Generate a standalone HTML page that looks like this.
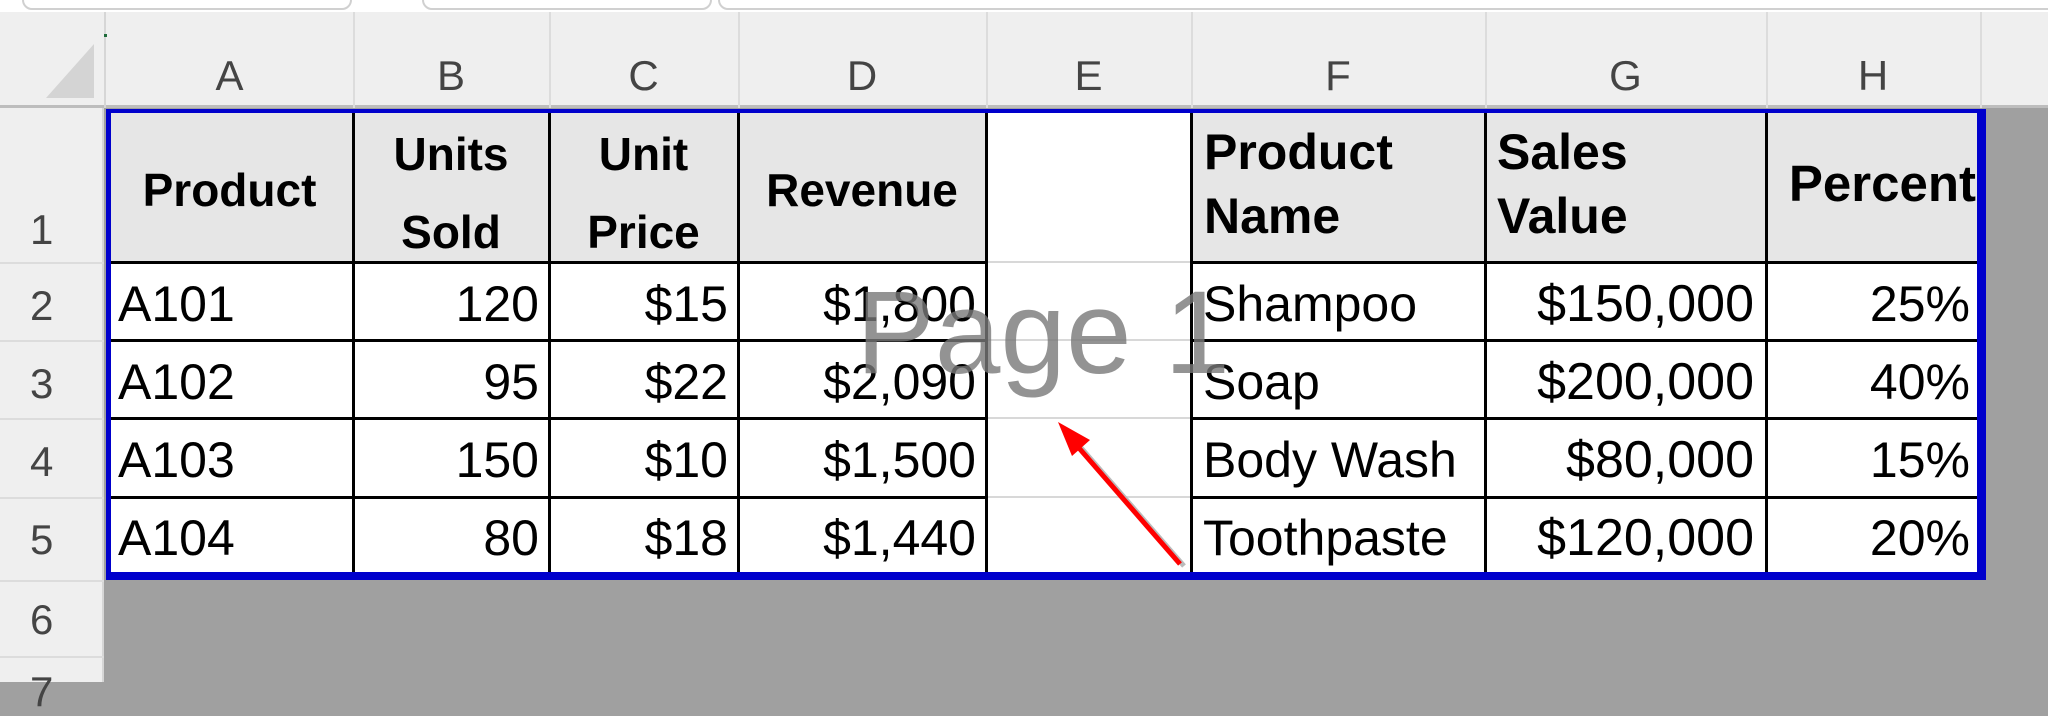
<!DOCTYPE html>
<html><head><meta charset="utf-8"><style>
body{margin:0;width:2048px;height:682px;overflow:hidden;background:#a0a0a0;position:relative;font-family:"Liberation Sans",sans-serif;}
div{position:absolute;box-sizing:border-box;}
.t{white-space:nowrap;color:#000;}
.cl{font-size:42px;color:#444;top:52px;text-align:center;}
.rl{font-size:42px;color:#444;left:30px;}
.hd{font-weight:bold;background:#e6e6e6;}
.d{font-size:50px;line-height:50px;}
</style></head><body>
<div style="left:0;top:0;width:2048px;height:12px;background:#fff;"></div>
<div style="left:22px;top:-20px;width:330px;height:30px;border:2px solid #d0d0d0;border-radius:10px;background:#fff;"></div>
<div style="left:422px;top:-20px;width:290px;height:30px;border:2px solid #d0d0d0;border-radius:10px;background:#fff;"></div>
<div style="left:718px;top:-20px;width:1400px;height:30px;border:2px solid #d0d0d0;border-radius:10px;background:#fff;"></div>
<div style="left:0;top:12px;width:2048px;height:96px;background:#efefef;border-bottom:3px solid #bdbdbd;"></div>
<div style="left:0;top:108px;width:104px;height:574px;background:#efefef;border-right:2px solid #d6d6d6;"></div>
<div style="left:104px;top:12px;width:2px;height:96px;background:#d6d6d6;"></div>
<svg style="position:absolute;left:0;top:0" width="110" height="110"><polygon points="94,44 94,98 46,98" fill="#d4d4d4"/><rect x="104" y="34" width="3" height="3" fill="#1e6b3a"/></svg>
<div class="cl" style="left:106px;width:247px;">A</div>
<div class="cl" style="left:353px;width:196px;">B</div>
<div class="cl" style="left:549px;width:189px;">C</div>
<div class="cl" style="left:738px;width:248px;">D</div>
<div class="cl" style="left:986px;width:205px;">E</div>
<div class="cl" style="left:1191px;width:294px;">F</div>
<div class="cl" style="left:1485px;width:281px;">G</div>
<div class="cl" style="left:1766px;width:214px;">H</div>
<div style="left:353px;top:12px;width:2px;height:96px;background:#dcdcdc"></div>
<div style="left:549px;top:12px;width:2px;height:96px;background:#dcdcdc"></div>
<div style="left:738px;top:12px;width:2px;height:96px;background:#dcdcdc"></div>
<div style="left:986px;top:12px;width:2px;height:96px;background:#dcdcdc"></div>
<div style="left:1191px;top:12px;width:2px;height:96px;background:#dcdcdc"></div>
<div style="left:1485px;top:12px;width:2px;height:96px;background:#dcdcdc"></div>
<div style="left:1766px;top:12px;width:2px;height:96px;background:#dcdcdc"></div>
<div style="left:1980px;top:12px;width:2px;height:96px;background:#dcdcdc"></div>
<div class="rl" style="top:206px;">1</div>
<div class="rl" style="top:282px;">2</div>
<div class="rl" style="top:360px;">3</div>
<div class="rl" style="top:438px;">4</div>
<div class="rl" style="top:516px;">5</div>
<div class="rl" style="top:596px;">6</div>
<div class="rl" style="top:668px;">7</div>
<div style="left:0;top:262px;width:104px;height:2px;background:#dcdcdc"></div>
<div style="left:0;top:340px;width:104px;height:2px;background:#dcdcdc"></div>
<div style="left:0;top:418px;width:104px;height:2px;background:#dcdcdc"></div>
<div style="left:0;top:497px;width:104px;height:2px;background:#dcdcdc"></div>
<div style="left:0;top:580px;width:104px;height:2px;background:#dcdcdc"></div>
<div style="left:0;top:656px;width:104px;height:2px;background:#dcdcdc"></div>
<div style="left:106px;top:110px;width:1876px;height:470px;background:#fff;"></div>
<div class="hd" style="left:106px;top:112px;width:247px;height:150px;"></div>
<div class="hd" style="left:353px;top:112px;width:196px;height:150px;"></div>
<div class="hd" style="left:549px;top:112px;width:189px;height:150px;"></div>
<div class="hd" style="left:738px;top:112px;width:248px;height:150px;"></div>
<div class="hd" style="left:1191px;top:112px;width:294px;height:150px;"></div>
<div class="hd" style="left:1485px;top:112px;width:281px;height:150px;"></div>
<div class="hd" style="left:1766px;top:112px;width:214px;height:150px;"></div>
<div style="left:986px;top:261px;width:205px;height:2px;background:#d8d8d8"></div>
<div style="left:986px;top:339px;width:205px;height:2px;background:#d8d8d8"></div>
<div style="left:986px;top:417px;width:205px;height:2px;background:#d8d8d8"></div>
<div style="left:986px;top:496px;width:205px;height:2px;background:#d8d8d8"></div>
<div style="left:106px;top:261px;width:880px;height:3px;background:#000"></div>
<div style="left:106px;top:339px;width:880px;height:3px;background:#000"></div>
<div style="left:106px;top:417px;width:880px;height:3px;background:#000"></div>
<div style="left:106px;top:496px;width:880px;height:3px;background:#000"></div>
<div style="left:1191px;top:261px;width:789px;height:3px;background:#000"></div>
<div style="left:1191px;top:339px;width:789px;height:3px;background:#000"></div>
<div style="left:1191px;top:417px;width:789px;height:3px;background:#000"></div>
<div style="left:1191px;top:496px;width:789px;height:3px;background:#000"></div>
<div style="left:352px;top:112px;width:3px;height:464px;background:#000"></div>
<div style="left:548px;top:112px;width:3px;height:464px;background:#000"></div>
<div style="left:737px;top:112px;width:3px;height:464px;background:#000"></div>
<div style="left:985px;top:112px;width:3px;height:464px;background:#000"></div>
<div style="left:1190px;top:112px;width:3px;height:464px;background:#000"></div>
<div style="left:1484px;top:112px;width:3px;height:464px;background:#000"></div>
<div style="left:1765px;top:112px;width:3px;height:464px;background:#000"></div>
<div class="t" style="left:106px;top:163px;width:247px;text-align:center;font-weight:bold;font-size:46px;">Product</div>
<div class="t" style="left:353px;top:115px;width:196px;text-align:center;font-weight:bold;font-size:46px;line-height:78px;">Units<br>Sold</div>
<div class="t" style="left:549px;top:115px;width:189px;text-align:center;font-weight:bold;font-size:46px;line-height:78px;">Unit<br>Price</div>
<div class="t" style="left:738px;top:163px;width:248px;text-align:center;font-weight:bold;font-size:46px;">Revenue</div>
<div class="t" style="left:1204px;top:120px;font-weight:bold;font-size:50px;line-height:64px;">Product<br>Name</div>
<div class="t" style="left:1497px;top:120px;font-weight:bold;font-size:50px;line-height:64px;">Sales<br>Value</div>
<div class="t" style="left:1766px;top:154px;width:210px;text-align:right;font-weight:bold;font-size:51px;">Percent</div>
<div class="t d" style="left:118px;top:279px;">A101</div>
<div class="t d" style="left:118px;top:357px;">A102</div>
<div class="t d" style="left:118px;top:435px;">A103</div>
<div class="t d" style="left:118px;top:513px;">A104</div>
<div class="t d" style="left:353px;top:279px;width:186px;text-align:right;">120</div>
<div class="t d" style="left:353px;top:357px;width:186px;text-align:right;">95</div>
<div class="t d" style="left:353px;top:435px;width:186px;text-align:right;">150</div>
<div class="t d" style="left:353px;top:513px;width:186px;text-align:right;">80</div>
<div class="t d" style="left:549px;top:279px;width:179px;text-align:right;">$15</div>
<div class="t d" style="left:549px;top:357px;width:179px;text-align:right;">$22</div>
<div class="t d" style="left:549px;top:435px;width:179px;text-align:right;">$10</div>
<div class="t d" style="left:549px;top:513px;width:179px;text-align:right;">$18</div>
<div class="t d" style="left:738px;top:279px;width:238px;text-align:right;">$1,800</div>
<div class="t d" style="left:738px;top:357px;width:238px;text-align:right;">$2,090</div>
<div class="t d" style="left:738px;top:435px;width:238px;text-align:right;">$1,500</div>
<div class="t d" style="left:738px;top:513px;width:238px;text-align:right;">$1,440</div>
<div class="t d" style="left:1203px;top:279px;">Shampoo</div>
<div class="t d" style="left:1203px;top:357px;">Soap</div>
<div class="t d" style="left:1203px;top:435px;">Body Wash</div>
<div class="t d" style="left:1203px;top:513px;">Toothpaste</div>
<div class="t d" style="left:1485px;top:279px;width:269px;text-align:right;font-size:52px;">$150,000</div>
<div class="t d" style="left:1485px;top:357px;width:269px;text-align:right;font-size:52px;">$200,000</div>
<div class="t d" style="left:1485px;top:435px;width:269px;text-align:right;font-size:52px;">$80,000</div>
<div class="t d" style="left:1485px;top:513px;width:269px;text-align:right;font-size:52px;">$120,000</div>
<div class="t d" style="left:1766px;top:279px;width:204px;text-align:right;">25%</div>
<div class="t d" style="left:1766px;top:357px;width:204px;text-align:right;">40%</div>
<div class="t d" style="left:1766px;top:435px;width:204px;text-align:right;">15%</div>
<div class="t d" style="left:1766px;top:513px;width:204px;text-align:right;">20%</div>
<div style="left:106px;top:109px;width:1880px;height:471px;border:5px solid #0000cc;border-top-width:4px;border-right-width:9px;border-bottom-width:8px;"></div>
<div class="t" style="left:856px;top:268px;font-size:118px;color:rgba(120,120,120,0.8);line-height:130px;">Page 1</div>
<svg style="position:absolute;left:0;top:0" width="2048" height="682">
<line x1="1184" y1="566" x2="1076" y2="442" stroke="#bbb" stroke-width="5"/>
<line x1="1180" y1="564" x2="1072" y2="440" stroke="#ff0000" stroke-width="5"/>
<polygon points="1058,422 1090,440 1072,456" fill="#ff0000"/>
</svg>
</body></html>
